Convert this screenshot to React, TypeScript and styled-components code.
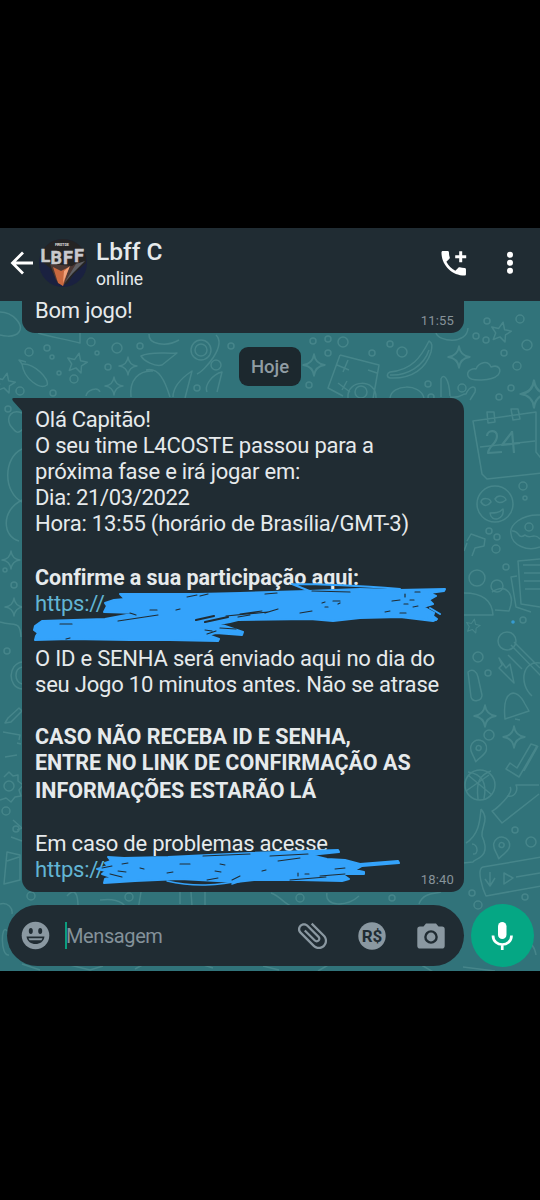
import React from 'react';
import styled, { createGlobalStyle } from 'styled-components';

const Global = createGlobalStyle`
  html, body { margin: 0; background: #000; }
  * { box-sizing: border-box; }
`;

const Screen = styled.div`
  width: 540px;
  height: 1200px;
  padding: 228px 0 229px;
  background: #000;
  font-family: Roboto, sans-serif;
  color: #e6eaec;
  overflow: hidden;
`;

const Phone = styled.main`
  display: flex;
  flex-direction: column;
  height: 743px;
  background: #31737a;
`;

const Header = styled.header`
  display: flex;
  align-items: center;
  flex: none;
  height: 73px;
  padding: 0 20px 3px 10px;
  background: #202c33;
`;

const Contact = styled.div`
  flex: 1;
  padding: 2px 0 0 8px;
`;

const Name = styled.h1`
  margin: 0;
  font-size: 24.5px;
  line-height: 29px;
  font-weight: 500;
  letter-spacing: 0;
`;

const Status = styled.div`
  font-size: 17.5px;
  line-height: 24px;
  margin-top: 1px;
`;

const Icon = styled.svg<{ $gap?: number }>`
  display: block;
  flex: none;
  margin-left: ${p => p.$gap ?? 0}px;
`;

const Chat = styled.section`
  position: relative;
  display: flex;
  flex-direction: column;
  flex: 1;
`;

const Wallpaper = styled.svg`
  position: absolute;
  inset: 0;
`;

const Bubble = styled.article<{ $height: number; $cut?: boolean }>`
  position: relative;
  width: 442px;
  height: ${p => p.$height}px;
  margin-left: 22px;
  padding: ${p => (p.$cut ? '0 13px' : '9px 13px')};
  border-radius: ${p => (p.$cut ? '0 0 13px 13px' : '0 13px 13px 13px')};
  background: #202c33;
`;

const Line = styled.p<{ $h?: number; $bold?: boolean; $ls?: number }>`
  margin: 0;
  height: ${p => p.$h ?? 26}px;
  font-size: ${p => (p.$bold ? 21.5 : 22)}px;
  line-height: 26px;
  font-weight: ${p => (p.$bold ? 700 : 400)};
  letter-spacing: ${p => p.$ls ?? (p.$bold ? 0 : -0.2)}px;
  white-space: nowrap;
`;

const CutLine = styled(Line)`
  line-height: 20px;
`;

const Link = styled.span`
  color: #62b5d3;
`;

const Time = styled.time`
  position: absolute;
  right: 10px;
  bottom: 4px;
  font-size: 13px;
  line-height: 16px;
  letter-spacing: 0.2px;
  color: #87939a;
`;

const Tail = styled.svg`
  position: absolute;
  left: -10px;
  top: 0;
`;

const Scribble = styled.svg`
  position: absolute;
  left: 0;
  top: 0;
  overflow: visible;
`;

const DayChip = styled.div`
  position: relative;
  align-self: center;
  width: 62px;
  height: 39px;
  margin: 14px 0 12px;
  border-radius: 9px;
  background: #1c282e;
  color: #909da4;
  font-size: 18.5px;
  font-weight: 500;
  line-height: 40px;
  text-align: center;
`;

const Composer = styled.footer`
  position: relative;
  display: flex;
  align-items: center;
  margin: 12px 6px 0 7px;
`;

const Field = styled.div`
  display: flex;
  align-items: center;
  width: 457px;
  height: 61px;
  padding: 0 19px 0 14px;
  border-radius: 31px;
  background: #202c33;
`;

const Caret = styled.i`
  width: 2px;
  height: 27px;
  margin-left: 15px;
  background: #0c9d7e;
`;

const Placeholder = styled.span`
  flex: 1;
  margin-left: -1px;
  font-size: 20px;
  letter-spacing: -0.4px;
  color: #84929a;
`;

const MicButton = styled.button`
  display: grid;
  place-items: center;
  width: 63px;
  height: 63px;
  margin-left: 7px;
  padding: 0 1px 0 0;
  border: 0;
  border-radius: 50%;
  background: #05a784;
`;

const Star4 = ({ x, y, s = 1 }: { x: number; y: number; s?: number }) => (
  <path transform={`translate(${x} ${y}) scale(${s})`} d="M0-9Q1-1 9 0Q1 1 0 9Q-1 1-9 0Q-1-1 0-9Z" />
);
const Star5 = ({ x, y, s = 1 }: { x: number; y: number; s?: number }) => (
  <path transform={`translate(${x} ${y}) scale(${s}) rotate(12)`} d="M0-10L3-3L10-3L5 2L6 9L0 5L-6 9L-5 2L-10-3L-3-3Z" />
);
const Pin = ({ x, y }: { x: number; y: number }) => (
  <g transform={`translate(${x} ${y}) rotate(12)`}>
    <path d="M0 11C-3 5-8 3-8-3A8 8 0 0 1 8-3C8 3 3 5 0 11Z" />
    <circle cy="-3" r="2.5" />
  </g>
);

const dots = [
  [487, 321, 3], [520, 319, 4], [476, 336, 3], [486, 340, 3], [527, 345, 5], [504, 353, 3], [517, 366, 4], [462, 388, 4],
  [511, 388, 3], [499, 397, 3], [523, 486, 4], [525, 498, 2], [489, 531, 3], [497, 537, 3], [496, 549, 4], [506, 567, 3],
  [523, 620, 3], [478, 657, 5], [488, 673, 3], [489, 735, 5], [515, 830, 3], [531, 842, 5], [472, 893, 3], [478, 905, 4],
  [525, 897, 3], [29, 352, 4], [47, 348, 3], [52, 357, 2], [91, 342, 4], [117, 348, 5], [140, 346, 3], [97, 353, 2],
  [108, 367, 3], [59, 373, 2], [74, 379, 4], [20, 391, 4], [53, 393, 3], [216, 365, 5], [231, 346, 3], [197, 388, 3],
  [313, 341, 3], [328, 339, 3], [343, 342, 5], [328, 353, 3], [390, 344, 3], [402, 352, 5], [372, 353, 3], [428, 384, 3],
  [431, 397, 3], [309, 385, 3], [8, 409, 3], [14, 585, 3], [5, 570, 2], [7, 651, 3], [6, 811, 4], [16, 829, 3],
  [31, 896, 4], [129, 897, 4], [300, 898, 4], [392, 898, 3],
];

function Doodles() {
  return (
    <Wallpaper width="540" height="670" viewBox="0 301 540 670" fill="none" stroke="#4d8c90" strokeWidth="1.5" strokeLinejoin="round" opacity="0.75">
      {dots.map(([x, y, r], i) => <circle key={i} cx={x} cy={y} r={r} />)}
      <Star5 x={501} y={332} /><Star5 x={77} y={363} /><Star5 x={5} y={383} /><Star5 x={473} y={626} s={0.7} />
      <Star4 x={459} y={357} s={1.2} /><Star4 x={314} y={365} s={1.2} /><Star4 x={128} y={366} /><Star4 x={114} y={386} />
      <Star4 x={534} y={394} s={1.5} /><Star4 x={485} y={716} s={1.2} /><Star4 x={514} y={737} s={1.2} /><Star4 x={11} y={560} /><Star4 x={14} y={607} />
      <path d="M468 376c-2-6 6-8 8-7 3-7 12-9 15-2 8-3 11 3 7 8-6 6-28 7-30 1Z" />
      <path d="M429 341c4 2 3 6 2 11-5 16-18 27-41 26-4-1-3-5 0-6 22-2 31-15 39-31ZM390 375c17 1 34-9 39-25" />
      <path d="m340 355 39 10-6 34M340 355l-12 33 15 8M348 360l-5 12m-6-7 12 5m19 0 9 3m-39 10 12 9m-3-11-5 9M348 398c-2-19 29-20 28 0" />
      <circle cx="361" cy="392" r="6" /><path d="M390 398c2-14 30-15 34 0M441 397v-18c2-6 8-2 9 17m0 1c11 2 12-4 16-3 4-9 11-9 9-2l-5 8M436 333c3 9 31 12 32-5" />
      <path d="M38 333c12 4 27 6 42 10V333M149 334c-1 11 18 13 30 6M141 356c11-5 24-2 36-3l-15 12c-7 2-18-4-21-9Zm5 14c13-3 19 11 24 27m-39 0c-2-17 8-27 22-26m20 26c0-12 10-20 19-26l-7 27M216 335c11 11-12 36-19 39" />
      <circle cx="201" cy="350" r="10" /><circle cx="201" cy="350" r="6" />
      <path d="M22 364c13-1 28 16 25 21-7 5-23-6-25-21Zm0 0-3-4 7 2M0 312c13 0 24 13 19 20s-19 3-19 3M207 392c-3-7 6-18 15-20l-5 20M86 396c1-6 12-10 14-4" />
      <path d="m473 421 63-9v40l16 20-65 7-5-5zM480 447l55-6M487 412h7l1 10-7 1zm24-3h7l2 10-7 1z" />
      <path strokeWidth="2.2" d="M487 436c0-6 10-7 10 0 0 8-8 9-9 17l14-1m10-20-10 13 18-2m-8-12 2 22" />
      <circle cx="495" cy="504" r="18" /><path d="M481 502c1-5 9-4 10 0-3 4-7 5-10 0Zm14-3c3-5 10-3 11 1-5 4-9 3-11-1Zm-5 14c5 0 9 0 13-4 2 11-12 14-13 4Z" />
      <path d="M540 515c-18-1-31 10-29 19 1 11 16 18 29 13m-28-16c8-1 5 9 13 4 5 5 9-3 15 4" /><circle cx="529" cy="527" r="4" />
      <path d="M467 541l4-7 14 5-1 7-9 2-3 8m-5-13-3 8M464 593c16 0 28 6 29 22H464m28-23c14-9 24 2 17 19l-14-1" /><circle cx="477" cy="578" r="8" /><circle cx="497" cy="586" r="6" />
      <path d="m540 559-22 2 3 43 19 3m-23-31-6 1 5 30 15 5m-8-47h17m-16 8h16m-16 8h16m-15 8h15" />
      <circle cx="507" cy="641" r="9" /><path d="m511 645 30 31m-27-34 26 26m0-5c-17-3-22 20-8 33m-10-27-14-14M499 658l7 10 4-4 4 19-15-15 3-3zM468 672c5-4 9 0 10 5l4 18c0 6-9 8-11 2l-3-25Zm37 47c-3-29 11-33 20-15l4 7-24 8Zm10 0 5 1" />
      <Pin x={478} y={751} /><Pin x={501} y={848} />
      <circle cx="480" cy="785" r="15" /><path d="m468 775 24 20m-26-4 23-16m-21-3c15 2 19 12 16 27m7-28c-12 4-15 12-13 28" />
      <path d="M506 769l13 8 18-31-6-2-14 24-7-5zm18 2 14-25m-31 50c9 2 11-7 9-11h23m-29 2c5 6-16 24-18 24l10 12 37-29" />
      <path d="M466 843c14-9 14-25 15-34m0 0c9 11 0 17 1 27 10 22-7 22-9 26l-10 1m9-19c6 0 7 11 1 10" />
      <path d="M542 857l-59 10c-7 2 0 23 3 29l55-10M490 872v13m-5-6 5 7 5-8m9-5 9 5-9 6zm12 4 24-4" />
      <path d="M22 413c-10-4-16 3-12 12 8 11 9 7 13 4M22 449c-19 9-19 43 0 53M22 500c-22 11-19 37-3 41M0 622c14 5 20-3 21 15M22 662c-14 2-15 25 0 27M22 667c-8 2-8 14 0 17" />
      <path d="m8 718 11-10 3 3-11 11-6 1zM3 732l17 3-1 5m-14 17 12-2m0-12 4 1" />
      <path d="M4 777l5-5 4 4 5-1v6l5 4-4 5 2 6-6 1-4 5-5-4-6 2M13 820l9 8-5 2m-6 7 11 4M7 852l13 3v25L4 884l3-32Zm0 9 12-4M0 904c8-2 13 4 12 10m55-18c12-13 11 10 11 14m22-10c20-3 31 7 23 13m15-3 3-18m64-3v19m66-15c12 4 16 17 30 13M180 892v12m11-12 1 14M327 893c-3 14 20 14 32 3m60 8c4-12 17-10 22-12M7 931c-6-9-7 26 2 24m13 9 18 6m30-5 20 5 13-4m32 3 13-7m46 0 19 6m50-2 16 4m51-6-12 7m100-8 17 10m28-6 32 4m17-20c9-9 21-14 24 4m-35 25 13-3m48-37v-21m1 30v-6" />
      <circle cx="9" cy="786" r="5" />
      <circle cx="513" cy="622" r="1.8" fill="#39a9ef" stroke="none" />
    </Wallpaper>
  );
}

const upperGaps = 'M187 597L197 595M200 596L208 594M265 594L277 593M312 591L350 592M333 601L340 601M325 607L328 607M392 601L400 600M410 600L414 600M404 604L408 604M400 613L406 613M385 612L390 611M240 614L262 611M265 613L278 609M238 617L250 615M300 613L312 611M150 610L157 610M176 610L180 609M130 613L136 615M118 621L158 615M226 616L268 612M60 624L72 624M220 628L236 629M205 630L212 631M207 634L216 631M66 639L70 638M405 594L405 597M415 592L420 592M413 607L418 606M322 603L325 602M338 604L340 603';
const lowerGaps = 'M203 856L250 854M270 856L308 854M278 861L300 858M305 874L309 874M298 873L298 876M320 876L345 874M290 880L326 877M335 869L345 868M207 880L218 878M232 880L240 876M180 864L190 864M220 864L225 865M110 874L122 877M102 868L112 866M215 871L221 872M140 868L144 869M122 864L128 863M167 873L173 872M262 871L266 870M118 871L126 872';

function LinkScribbles() {
  return (
    <Scribble width="442" height="494" viewBox="22 398 442 494" fill="#34a3fb" stroke="#34a3fb" strokeWidth="2" strokeLinecap="round" strokeLinejoin="round">
      <path d="M120 594L165 594L198 594L240 593L308 591L360 589L398 590L445 589L444 591L429 593L436 596L429 600L433 604L423 607L434 613L433 616L437 619L433 621L400 617L360 618L333 621L310 619L238 620L230 622L219 624L243 632L242 635L216 633L208 635L219 639L218 641L170 640L130 640L70 639L35 640L36 636L38 633L34 630L35 626L42 621L105 619L137 613L104 612L107 606L105 603L114 600L125 599Z" />
      <path fill="none" d="M292 584C320 584 350 585 400 589M292 584L312 592M430 608l10 6M428 617l8 3M222 629l20 4" />
      <g stroke="#202c33" strokeWidth="1.2" fill="none">
        <path d={upperGaps} />
        <path strokeWidth="2.2" d="M205 622L228 617M196 620L214 616" />
      </g>
      <path d="M108 857L124 858L168 857L250 853L338 850L339 852L310 855L327 859L345 860L360 864L398 861L399 863L362 866L355 870L364 872L364 874L342 874L349 879L342 881L300 880L254 880L236 882L180 879L135 881L104 883L105 879L111 877L102 874L106 871L97 869L108 866L105 863L111 861Z" />
      <path fill="none" strokeWidth="1.5" d="M167 881C192 887 220 886 241 880M232 884L244 880" />
      <path stroke="#202c33" strokeWidth="1.1" fill="none" d={lowerGaps} />
    </Scribble>
  );
}

function Avatar() {
  return (
    <Icon $gap={4} width="50" height="50" viewBox="38 237 50 50">
      <defs><clipPath id="face"><circle cx="63" cy="262" r="24" /></clipPath></defs>
      <g clipPath="url(#face)">
        <rect x="38" y="237" width="50" height="50" fill="#1a2140" />
        <path d="M40 237h46v25l-12 11-7 10-9-1-8-15-10-8Z" fill="#252424" />
        <path d="m50 263 22 2 8-5-9 14-8 11-7-6Z" fill="#4c3935" />
        <path d="m53 266 8 4 8-4-6 19-5-3Z" fill="#c9683f" />
        <path d="m64 270 6-5-7 17Z" fill="#f1a27a" />
        <path d="m76 263 9-3-12 12-8 9Z" fill="#5f6065" />
      </g>
      <text x="55" y="245" fontFamily="Roboto" fontSize="4" fontWeight="700" fill="#d8d8d8" textLength="14">FIRST DE</text>
      <g fontFamily="Roboto" fontWeight="700" fontSize="18" fill="#c9c9cd" stroke="#c9c9cd" strokeWidth="0.5">
        <text x="40.500" y="261">L</text><text x="50.500" y="263">B</text><text x="63" y="263">F</text><text x="74" y="261">F</text>
      </g>
    </Icon>
  );
}

export default function App() {
  return (
    <>
      <Global />
      <Screen>
        <Phone>
          <Header>
            <Icon width="24" height="26" viewBox="10 250 24 26" fill="none" stroke="#fff" strokeWidth="2.8">
              <path d="M33 263H13M23 252.5 12.5 263 23 273.5" />
            </Icon>
            <Avatar />
            <Contact>
              <Name>Lbff C</Name>
              <Status>online</Status>
            </Contact>
            <Icon width="28" height="28" viewBox="440 249 28 28" fill="#fff">
              <path transform="translate(437.4 247) scale(1.36)" d="M6.62 10.79c1.44 2.83 3.76 5.14 6.59 6.59l2.2-2.2c.27-.27.67-.36 1.02-.24 1.12.37 2.33.57 3.57.57.55 0 1 .45 1 1V20c0 .55-.45 1-1 1-9.39 0-17-7.61-17-17 0-.55.45-1 1-1h3.5c.55 0 1 .45 1 1 0 1.25.2 2.45.57 3.57.11.35.03.74-.25 1.02l-2.2 2.2z" />
              <path d="M459.2 251.2h3v4h4v3h-4v4h-3v-4h-4v-3h4z" />
            </Icon>
            <Icon $gap={32} width="20" height="24" viewBox="500 252 20 24" fill="#fff">
              <circle cx="510" cy="255.7" r="3" /><circle cx="510" cy="263.7" r="3" /><circle cx="510" cy="271.7" r="3" />
            </Icon>
          </Header>
          <Chat>
            <Doodles />
            <Bubble $height={32} $cut>
              <CutLine $h={23}>Bom jogo!</CutLine>
              <Time>11:55</Time>
            </Bubble>
            <DayChip>Hoje</DayChip>
            <Bubble $height={494}>
              <Tail width="11" height="16" viewBox="0 0 11 16" fill="#202c33"><path d="M11 0H2Q-1 0 1 3L10 13V16H11Z" /></Tail>
              <Line $ls={-0.3}>Olá Capitão!</Line>
              <Line $ls={-0.22}>O seu time L4COSTE passou para a</Line>
              <Line $ls={-0.22}>próxima fase e irá jogar em:</Line>
              <Line $ls={-0.33}>Dia: 21/03/2022</Line>
              <Line $h={54}>Hora: 13:55 (horário de Brasília/GMT-3)</Line>
              <Line $bold $ls={-0.03}>Confirme a sua participação aqui:</Line>
              <Line $h={55}><Link>https://</Link></Line>
              <Line>O ID e SENHA será enviado aqui no dia do</Line>
              <Line $h={52}>seu Jogo 10 minutos antes. Não se atrase</Line>
              <Line $bold>CASO NÃO RECEBA ID E SENHA,</Line>
              <Line $bold $h={28}>ENTRE NO LINK DE CONFIRMAÇÃO AS</Line>
              <Line $bold $h={53}>INFORMAÇÕES ESTARÃO LÁ</Line>
              <Line $ls={-0.22}>Em caso de problemas acesse</Line>
              <Line><Link>https://</Link></Line>
              <Time>18:40</Time>
              <LinkScribbles />
            </Bubble>
            <Composer>
              <Field>
                <Icon width="29" height="29" viewBox="0 0 29 29">
                  <circle cx="14.5" cy="14.5" r="13.8" fill="#8a98a1" />
                  <g fill="#202c33"><ellipse cx="9.8" cy="10" rx="2" ry="3" /><ellipse cx="19.2" cy="10" rx="2" ry="3" /><path d="M5.5 15.5h18c-1 10-17 10-18 0Z" /></g>
                  <path d="M7.5 17.2h14l-1 2h-12Z" fill="#8a98a1" />
                </Icon>
                <Caret />
                <Placeholder>Mensagem</Placeholder>
                <Icon width="32" height="30" viewBox="-17 -14 32 30" fill="#8a98a1">
                  <path transform="rotate(-45) scale(1.5) translate(-12.5 -12)" d="M16.5 6v11.5c0 2.21-1.79 4-4 4s-4-1.79-4-4V5c0-1.38 1.12-2.5 2.5-2.5s2.5 1.12 2.5 2.5v10.5c0 .55-.45 1-1 1s-1-.45-1-1V6H10v9.5c0 1.38 1.12 2.5 2.5 2.5s2.5-1.12 2.5-2.5V5c0-2.21-1.79-4-4-4S7 2.79 7 5v12.5c0 3.04 2.46 5.5 5.5 5.5s5.5-2.46 5.5-5.5V6h-1.5z" />
                </Icon>
                <Icon $gap={30} width="28" height="28" viewBox="0 0 28 28">
                  <circle cx="14" cy="14" r="13.7" fill="#8a98a1" />
                  <text x="14" y="20" textAnchor="middle" fontFamily="Roboto" fontSize="17" fontWeight="700" fill="#202c33">R$</text>
                </Icon>
                <Icon $gap={31} width="28" height="26" viewBox="0 0 28 26">
                  <path fill="#8a98a1" d="M9 .5h10l2.5 3H25q2.7 0 2.7 2.7v16.5q0 2.8-2.7 2.8H3Q.3 25.5.3 22.7V6.2Q.3 3.5 3 3.5H6.5Z" />
                  <circle cx="14" cy="14" r="5.6" fill="none" stroke="#202c33" strokeWidth="2.4" />
                </Icon>
              </Field>
              <MicButton aria-label="Gravar">
                <Icon width="24" height="30" viewBox="490 920 24 30">
                  <rect x="498" y="921" width="8.5" height="17" rx="4.25" fill="#fff" />
                  <path d="M493 934.5c0 12 18.5 12 18.5 0M502.25 943v6" fill="none" stroke="#fff" strokeWidth="2.7" />
                </Icon>
              </MicButton>
            </Composer>
          </Chat>
        </Phone>
      </Screen>
    </>
  );
}
